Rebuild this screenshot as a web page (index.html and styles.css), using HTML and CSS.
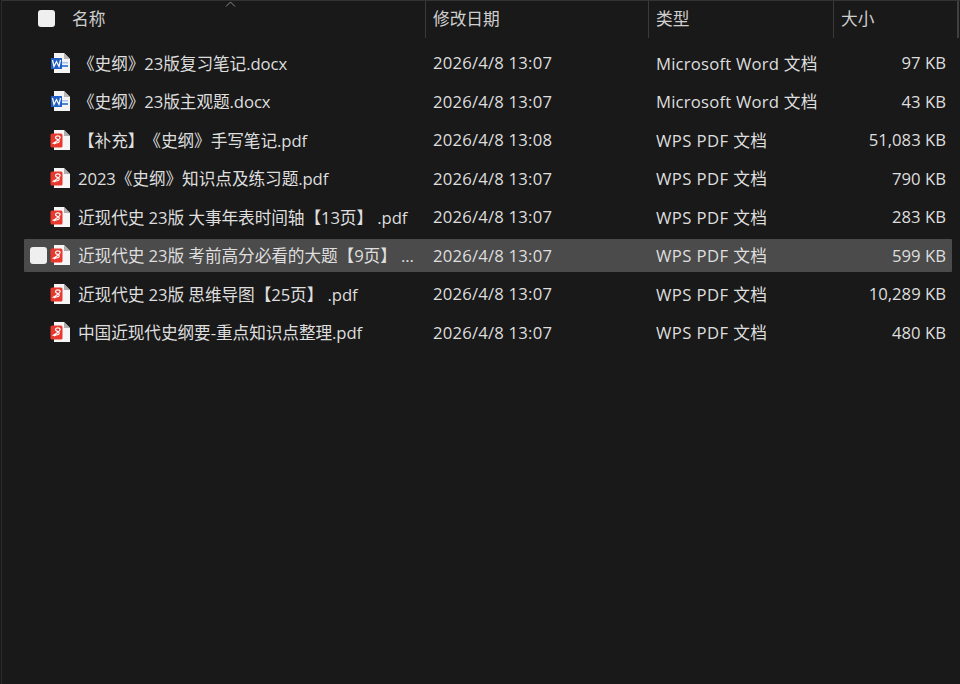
FILE: index.html
```html
<!DOCTYPE html>
<html lang="zh-CN">
<head>
    <meta charset="UTF-8">
    <link rel="stylesheet" href="styles.css">
    <title>文件列表</title>
</head>
<body>
    <svg class="defs" width="0" height="0">
        <symbol id="word" viewBox="0 0 20 22">
            <path d="M4 1h10l6 6v14H4z" fill="#f4f4f4"/>
            <path d="M14 1l6 6h-6z" fill="#b9b9b9"/>
            <rect x="12" y="10" width="6" height="1.500" fill="#a9c6ee"/>
            <rect x="12" y="13" width="6" height="2" fill="#4d86d6"/>
            <rect x="1" y="6" width="11" height="11" fill="#1f5fc4"/>
            <path d="M2.500 8l1.500 6.500 2.500-5 2.500 5 1.500-6.500" fill="none" stroke="#fff" stroke-width="1.200"/>
        </symbol>
        <symbol id="pdf" viewBox="0 0 20 22">
            <path d="M4 1h10l6 6v14H4z" fill="#f6f6f6"/>
            <path d="M14 1l6 6h-6z" fill="#aeaeae"/>
            <rect x="0.500" y="4.500" width="12" height="14" rx="1.500" fill="#e8392f"/>
            <path d="M2.500 14.500c1.500-.2 2.500-1 4-2.200 2-1.500 4-2.600 3.600-4.300-.4-1.500-4-1.600-4.600.1-.5 1.600 2 2.300 3.100 3 1.200 .9 .6 2.400-.9 2.600-1.300 .2-2.500 .2-3.700 1.300" fill="none" stroke="#fff" stroke-width="1.200"/>
        </symbol>
    </svg>

    <div class="explorer">
        <div class="header">
            <div class="col-name">
                <span class="checkbox head-check"></span>
                <span>名称</span>
                <svg class="sort" width="11" height="6" viewBox="0 0 11 6">
                    <path d="M1 5.500L5.500 1 10 5.500" fill="none" stroke="#8a8a8a"/>
                </svg>
            </div>
            <div class="col-date">修改日期</div>
            <div class="col-type">类型</div>
            <div class="col-size">大小</div>
        </div>

        <div class="list">
            <div class="row">
                <div class="name"><svg class="icon"><use href="#word"/></svg><span class="title">《史纲》23版复习笔记.docx</span></div>
                <div class="date">2026/4/8 13:07</div>
                <div class="type">Microsoft Word 文档</div>
                <div class="size">97 KB</div>
            </div>
            <div class="row">
                <div class="name"><svg class="icon"><use href="#word"/></svg><span class="title">《史纲》23版主观题.docx</span></div>
                <div class="date">2026/4/8 13:07</div>
                <div class="type">Microsoft Word 文档</div>
                <div class="size">43 KB</div>
            </div>
            <div class="row">
                <div class="name"><svg class="icon"><use href="#pdf"/></svg><span class="title">【补充】《史纲》手写笔记.pdf</span></div>
                <div class="date">2026/4/8 13:08</div>
                <div class="type wps">WPS PDF 文档</div>
                <div class="size">51,083 KB</div>
            </div>
            <div class="row">
                <div class="name"><svg class="icon"><use href="#pdf"/></svg><span class="title">2023《史纲》知识点及练习题.pdf</span></div>
                <div class="date">2026/4/8 13:07</div>
                <div class="type wps">WPS PDF 文档</div>
                <div class="size">790 KB</div>
            </div>
            <div class="row">
                <div class="name"><svg class="icon"><use href="#pdf"/></svg><span class="title">近现代史 23版 大事年表时间轴【13页】 .pdf</span></div>
                <div class="date">2026/4/8 13:07</div>
                <div class="type wps">WPS PDF 文档</div>
                <div class="size">283 KB</div>
            </div>
            <div class="row selected">
                <span class="checkbox row-check"></span>
                <div class="name"><svg class="icon"><use href="#pdf"/></svg><span class="title">近现代史 23版 考前高分必看的大题【9页】 ...</span></div>
                <div class="date">2026/4/8 13:07</div>
                <div class="type wps">WPS PDF 文档</div>
                <div class="size">599 KB</div>
            </div>
            <div class="row">
                <div class="name"><svg class="icon"><use href="#pdf"/></svg><span class="title">近现代史 23版 思维导图【25页】 .pdf</span></div>
                <div class="date">2026/4/8 13:07</div>
                <div class="type wps">WPS PDF 文档</div>
                <div class="size">10,289 KB</div>
            </div>
            <div class="row">
                <div class="name"><svg class="icon"><use href="#pdf"/></svg><span class="title">中国近现代史纲要-重点知识点整理.pdf</span></div>
                <div class="date">2026/4/8 13:07</div>
                <div class="type wps">WPS PDF 文档</div>
                <div class="size">480 KB</div>
            </div>
        </div>
    </div>
</body>
</html>
```

FILE: styles.css
```css
html, body {
    margin: 0;
    height: 100%;
    background-color: #191919;
}

body {
    font-family: "Open Sans", "Noto Sans CJK SC", sans-serif;
    font-size: 16.7px;
    color: #dedede;
    text-spacing-trim: space-all;
    overflow: hidden;
}

.defs {
    display: block;
    height: 0;
}

.explorer {
    height: 684px;
    box-sizing: border-box;
    border-left: 1px solid #2b2b2b;
    margin-left: 1px;
    border-top: 1px solid #333333;
}

/* header */
.header {
    display: grid;
    grid-template-columns: 424px 223px 185px 125px;
    height: 37px;
    color: #cfcfcf;
}

.header > div {
    display: flex;
    align-items: center;
    padding-left: 7px;
    border-right: 1px solid #3a3a3a;
    box-sizing: border-box;
    padding-bottom: 3px;
}

.header > .col-size {
    border-right: 2px solid #404040;
}

.col-name {
    position: relative;
    gap: 17px;
    padding-left: 36px !important;
}

.sort {
    position: absolute;
    left: 223px;
    top: 0;
}

.checkbox {
    display: block;
    width: 17px;
    height: 17px;
    border-radius: 3px;
    background-color: #efefef;
    flex: none;
}

/* rows */
.list {
    margin-top: 8px;
    margin-left: 22px;
    width: 928px;
}

.row {
    position: relative;
    display: grid;
    grid-template-columns: 401px 223px 185px 1fr;
    align-items: center;
    height: 33px;
    margin-bottom: 5.5px;
    border-radius: 1px;
}

.row > div {
    padding-left: 8px;
    white-space: nowrap;
    min-width: 0;
}

.selected {
    background-color: #4b4b4b;
}

.row-check {
    position: absolute;
    left: 6px;
    top: 8px;
}

.name {
    display: flex;
    align-items: center;
    gap: 8px;
    padding-left: 26px !important;
}

.icon {
    width: 20px;
    height: 22px;
    flex: none;
}

.title {
    margin-right: 6px;
    letter-spacing: -0.1px;
}

.date, .type {
    letter-spacing: 0.2px;
}

.type.wps {
    letter-spacing: 0.4px;
}

.size {
    text-align: right;
    padding-right: 6px;
}
```
